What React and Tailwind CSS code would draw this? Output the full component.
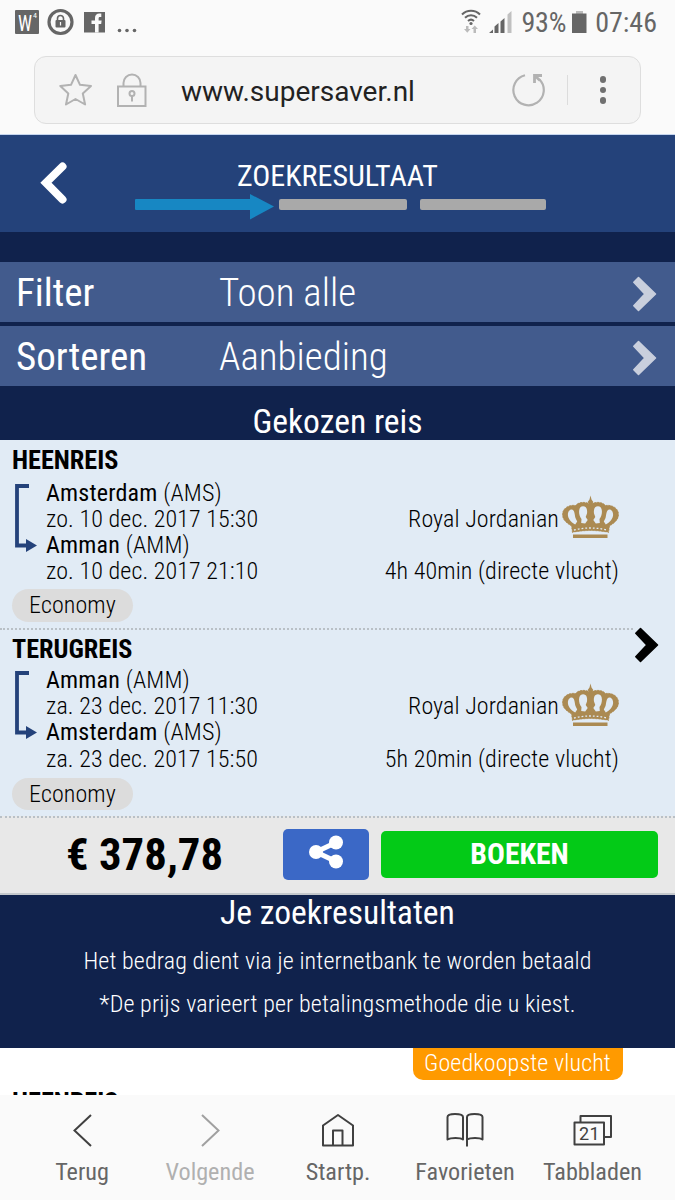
const trips = [
  {
    title: 'HEENREIS',
    from: 'Amsterdam',
    fromCode: 'AMS',
    depart: 'zo. 10 dec. 2017 15:30',
    to: 'Amman',
    toCode: 'AMM',
    arrive: 'zo. 10 dec. 2017 21:10',
    duration: '4h 40min (directe vlucht)'
  },
  {
    title: 'TERUGREIS',
    from: 'Amman',
    fromCode: 'AMM',
    depart: 'za. 23 dec. 2017 11:30',
    to: 'Amsterdam',
    toCode: 'AMS',
    arrive: 'za. 23 dec. 2017 15:50',
    duration: '5h 20min (directe vlucht)'
  }
]

function Crown() {
  return (
    <svg width="57" height="44" viewBox="0 0 57 44" fill="none" className="-mt-[3px] shrink-0">
      <path d="M28.500 0.500l1 4 1.800 2.500-1.800 3h-2l-1.800-3 1.800-2.500z" fill="#ab8a52" />
      <path
        d="M10.500 37.500L9.500 31C4 27.500 0.500 24.500 0.500 19.500 0.500 12.500 8 9.500 13.500 10.500 17 6.500 24 6.500 28.500 9.500 33 6.500 40 6.500 43.500 10.500 49 9.500 56.500 12.500 56.500 19.500 56.500 24.500 53 27.500 47.500 31L46.500 37.500q-18-4-36 0z"
        fill="#ab8a52"
        stroke="#ab8a52"
        strokeWidth="0.800"
        strokeDasharray="2 1"
      />
      {/* openings between the arches */}
      <g fill="#e1ebf5">
        <path d="M9.500 14.500c3.500 0.500 3 5 4 8.500l1.700 3.500-2 3c-4.500-2.500-7.500-6.500-7.300-10 0-2.500 1.500-5 3.600-5z" />
        <path d="M47.500 14.500c-3.500 0.500-3 5-4 8.500l-1.700 3.500 2 3c4.500-2.500 7.500-6.500 7.300-10 0-2.500-1.500-5-3.600-5z" />
        <path d="M21 11.300c3.800 0 4.500 3.700 4 7.200l-1.300 3.500 2 3-2.500 3.500-4-0.500 0.300-4c-3-3-4-12.700 1.500-12.700z" />
        <path d="M36 11.300c-3.800 0-4.500 3.700-4 7.200l1.300 3.500-2 3 2.500 3.500 4-0.500-0.300-4c3-3 4-12.700-1.500-12.700z" />
      </g>
      <path d="M12 35q16.500-4 33 0" stroke="#e1ebf5" strokeWidth="1.300" strokeDasharray="1.800 2" />
      <path d="M11 38.300h35" stroke="#e1ebf5" strokeWidth="1.400" />
      <path d="M11 41.300h34.500" stroke="#ab8a52" strokeWidth="3.400" />
    </svg>
  )
}

function RouteArrow() {
  return (
    <svg width="22" height="68" viewBox="0 0 22 68" className="shrink-0">
      <path d="M14 2H2v59.500h10" fill="none" stroke="#24427a" strokeWidth="3.800" />
      <path d="M11 55l11 6.500-11 6.500z" fill="#24427a" />
    </svg>
  )
}

function Chevron({ className }) {
  return (
    <svg width="24" height="36" viewBox="0 0 24 36" className={className}>
      <path d="M5.500 1.500L22.500 18 5.500 34.500 0.800 29.800l11-11.800L0.800 6.200z" fill="currentColor" stroke="currentColor" strokeWidth="1.500" strokeLinejoin="round" />
    </svg>
  )
}

function FilterRow({ label, value }) {
  return (
    <div className="flex h-[60px] items-center bg-[#425b8d] pl-4 pr-[18px] text-[39px] leading-[60px] text-white">
      <span className="w-[203px] pt-[2px]">{label}</span>
      <span className="flex-1 pt-[2px] font-light">{value}</span>
      <Chevron className="mt-1 text-[#c9cfdd]" />
    </div>
  )
}

function Trip({ trip, compact }) {
  return (
    <section className="flex h-[188px] flex-col pl-3 pr-14 text-black">
      <h3 className={`h-[30px] text-[26.2px] font-bold leading-[30px] ${compact ? 'mt-1' : 'mt-[5px]'}`}>{trip.title}</h3>
      <div className={`flex pl-[3px] ${compact ? 'mt-[3px]' : 'mt-[4.6px]'}`}>
        <div className="pt-1">
          <RouteArrow />
        </div>
        <div className="ml-[9px] flex-1 text-[24px] font-light leading-[26.2px] tracking-[0.1px]">
          <p className="tracking-[0.2px]"><span className="font-normal">{trip.from}</span> ({trip.fromCode})</p>
          <div className="flex h-[26.2px] items-center justify-between">
            <p>{trip.depart}</p>
            <p className="flex items-center gap-[3px]">
              Royal Jordanian
              <Crown />
            </p>
          </div>
          <p className="tracking-[0.2px]"><span className="font-normal">{trip.to}</span> ({trip.toCode})</p>
          <div className="flex justify-between">
            <p>{trip.arrive}</p>
            <p>{trip.duration}</p>
          </div>
        </div>
      </div>
      <div className={`w-[121px] rounded-full bg-[#dcdcdc] text-center text-[24px] font-light tracking-[0.1px] ${compact ? 'mt-[6px] h-8 leading-[32px]' : 'mt-[4.4px] h-[33px] leading-[33px]'}`}>
        Economy
      </div>
    </section>
  )
}

function StatusBar() {
  return (
    <div className="flex h-[56px] items-start pl-[15px] pr-[18px] text-[#666]">
      <svg width="130" height="40" viewBox="0 0 130 40" className="shrink-0">
        <rect x="0" y="10" width="24" height="24" rx="1" fill="#666" />
        <text x="3" y="30.500" fontSize="22" fill="#fff" textLength="14" lengthAdjust="spacingAndGlyphs">W</text>
        <text x="18" y="17.500" fontSize="8" fill="#fff">4</text>
        <circle cx="45.500" cy="22" r="11.500" fill="none" stroke="#666" strokeWidth="3.200" />
        <rect x="40.500" y="20" width="10" height="7.500" rx="1" fill="#666" />
        <path d="M42.500 20v-1.500a3 3 0 0 1 6 0V20" fill="none" stroke="#666" strokeWidth="1.600" />
        <path d="M45.500 22v3.500" stroke="#fafafa" strokeWidth="1.200" />
        <path d="M69 12h21v20.500H69z" fill="#666" />
        <path d="M80 32.500v-8.500h-3.500v-3.500H80v-2.500c0-3 1.700-4.500 4.300-4.500h2v3.500h-1.200c-1.300 0-1.500.6-1.500 1.600v1.900h3l-.4 3.500h-2.600v8.500z" fill="#fafafa" />
        <circle cx="104.500" cy="30.500" r="1.800" fill="#666" />
        <circle cx="112" cy="30.500" r="1.800" fill="#666" />
        <circle cx="119.500" cy="30.500" r="1.800" fill="#666" />
      </svg>
      <div className="flex-1" />
      <svg width="52" height="40" viewBox="0 0 52 40" className="shrink-0">
        <g fill="none" stroke="#666" strokeWidth="2">
          <path d="M1 14.500c5-5 13-5 18 0" />
          <path d="M4 17.800c3.500-3.500 8.500-3.500 12 0" />
          <path d="M7 21c2-1.800 4-1.800 6 0" />
        </g>
        <circle cx="10" cy="23.500" r="1.600" fill="#666" />
        <path d="M5 26h2.500v3h2l-3.200 3.800L3 29h2zM12.500 33v-4h-2l3.200-3.500L17 29h-2v4z" fill="#bbb" />
        <path d="M28 33l4-3.500V33zM33.500 33v-6.500l4-3.500v10zM39.500 33V21.500l4-3.500v15z" fill="#666" />
        <path d="M46.500 33V14.500l4-3.500v22z" fill="#c0c0c0" />
      </svg>
      <span className="ml-2 mt-[5px] text-[28px] leading-[36px] tracking-[-0.2px]">93%</span>
      <svg width="15" height="40" viewBox="0 0 15 40" className="ml-[6px] shrink-0">
        <path d="M4 11h7v3H4z" fill="#bbb" />
        <path d="M0 13.500h14.500V33H0z" fill="#666" />
      </svg>
      <span className="ml-2 mt-[5px] text-[28px] leading-[36px]">07:46</span>
    </div>
  )
}

function AddressBar() {
  return (
    <div className="mx-[34px] flex h-[68px] items-center rounded-xl border border-[#dedede] bg-[#f4f4f4] pl-6">
      <svg width="34" height="34" viewBox="0 0 34 34" fill="none" stroke="#b2b2b2" strokeWidth="2" strokeLinejoin="round">
        <path d="M16.500 2l4.500 9.800 11 1.200-8.200 7.500 2.300 11-9.600-5.500L7 31.500l2.300-11L1.300 13l10.700-1.200z" />
      </svg>
      <svg width="30" height="34" viewBox="0 0 30 34" fill="none" stroke="#b2b2b2" strokeWidth="2" className="ml-6">
        <rect x="1" y="13.500" width="27.500" height="19.500" />
        <path d="M6.500 13V10a8.500 8.500 0 0 1 17 0v3" />
        <circle cx="15" cy="20.500" r="2.500" />
        <path d="M15 23v5.500" />
      </svg>
      <span className="ml-[34px] mt-[3px] flex-1 font-['Roboto',sans-serif] text-[28px] leading-[40px] text-[#222] [font-stretch:100%]">www.supersaver.nl</span>
      <svg width="34" height="34" viewBox="0 0 34 34" fill="none" stroke="#b2b2b2" strokeWidth="2.200" className="ml-px">
        <path d="M13 2.300A15.200 15.200 0 1 0 27.500 6.500" />
        <path d="M22.500 10V2.500h7.500M22.500 2.500l5.500 5" strokeWidth="2.800" />
      </svg>
      <div className="ml-[21px] h-[30px] w-px bg-[#dcdcdc]" />
      <div className="ml-[32px] mr-[34px] flex flex-col gap-1">
        <span className="h-[6.500px] w-[6.500px] rounded-full bg-[#707070]" />
        <span className="h-[6.500px] w-[6.500px] rounded-full bg-[#707070]" />
        <span className="h-[6.500px] w-[6.500px] rounded-full bg-[#707070]" />
      </div>
    </div>
  )
}

function NavItem({ label, className, children }) {
  return (
    <div className={`flex flex-col items-center text-[24.2px] leading-[30px] ${className}`}>
      <svg width="40" height="36" viewBox="0 0 40 36" fill="none" strokeWidth="2" className="mb-[9px]">
        {children}
      </svg>
      {label}
    </div>
  )
}

export default function App() {
  return (
    <div className="flex h-[1200px] w-[675px] flex-col overflow-hidden bg-[#fafafa] font-['Roboto_Condensed','Roboto',sans-serif] [font-stretch:75%]">
      <div className="h-[135px] shrink-0 border-b border-[#c5d5ee]">
        <StatusBar />
        <AddressBar />
      </div>

      <header className="flex h-[97px] shrink-0 bg-[#24427a] pt-[24px] text-white">
        <svg width="28" height="44" viewBox="0 0 28 44" className="ml-10 mt-[2px]">
          <path d="M22.500 5.500L6 21.700 22.500 38.500" fill="none" stroke="currentColor" strokeWidth="8" strokeLinecap="round" />
        </svg>
        <div className="ml-[67px] w-[411px]">
          <h1 className="pl-[102px] text-[30px] leading-[34px]">ZOEKRESULTAAT</h1>
          <div className="flex h-[26px] items-center">
            <svg width="139" height="27" viewBox="0 0 139 27" className="mt-px">
              <path d="M1 6h114V1l24 12.500L115 26.500V17H1a1 1 0 0 1-1-1V7a1 1 0 0 1 1-1z" fill="#1787c3" />
            </svg>
            <span className="-mt-[3px] ml-[5px] h-[11px] w-[128px] rounded-[2px] bg-[#a9a9a9]" />
            <span className="-mt-[3px] ml-[13px] h-[11px] w-[126px] rounded-[2px] bg-[#a9a9a9]" />
          </div>
        </div>
      </header>

      <div className="flex h-[208px] shrink-0 flex-col gap-1 bg-[#10224c] pt-[30px]">
        <FilterRow label="Filter" value="Toon alle" />
        <FilterRow label="Sorteren" value="Aanbieding" />
        <h2 className="mt-[13px] text-center text-[33.600px] leading-[38px] text-white">Gekozen reis</h2>
      </div>

      <main className="relative h-[376px] shrink-0 bg-[#e1ebf5]">
        <Trip trip={trips[0]} />
        <div className="h-[2px] w-[633px] border-t-2 border-dotted border-[#b9c0c6]" />
        <Trip trip={trips[1]} compact />
        <Chevron className="absolute right-[16px] top-[187px] text-black" />
      </main>

      <div className="flex h-[79px] shrink-0 items-center border-b-2 border-t-2 border-t-[#b9c0c6] border-b-[#c4c8cc] bg-[#e8e8e8] pb-[3px] [border-top-style:dotted]">
        <span className="ml-[66px] w-[217px] pt-px text-[44.8px] font-bold text-black">€ 378,78</span>
        <button type="button" className="flex h-[51px] w-[86px] items-center justify-center rounded-[5px] bg-[#3b68c6]">
          <svg width="36" height="36" viewBox="0 0 36 36" fill="#fff" className="-mt-1">
            <circle cx="8" cy="18" r="7" />
            <circle cx="28" cy="8.500" r="7" />
            <circle cx="28" cy="27.500" r="7" />
            <path d="M28 8.500L8 18l20 9.500" fill="none" stroke="#fff" strokeWidth="5" />
          </svg>
        </button>
        <button type="button" className="ml-3 h-[47px] w-[277px] rounded-[5px] bg-[#03ca17] text-[29.700px] font-bold leading-[46px] text-white">BOEKEN</button>
      </div>

      <div className="h-[153px] shrink-0 bg-[#10224c] text-center text-white">
        <h2 className="text-[33.600px] leading-[36px]">Je zoekresultaten</h2>
        <p className="mt-[9px] text-[24px] font-light leading-[43px] tracking-[0.13px]">Het bedrag dient via je internetbank te worden betaald</p>
        <p className="text-[24px] font-light leading-[43px] tracking-[0.13px]">*De prijs varieert per betalingsmethode die u kiest.</p>
      </div>

      <div className="flex h-[47px] shrink-0 justify-between overflow-hidden bg-white pl-3 pr-[52px]">
        <h3 className="mt-[39px] text-[26.2px] font-bold leading-[30px] text-black">HEENREIS</h3>
        <div className="h-8 w-[210px] rounded-b-[10px] bg-[#ff9a00] pr-px text-center text-[24px] font-light leading-[30px] tracking-[0.12px] text-white">Goedkoopste vlucht</div>
      </div>

      <nav className="flex h-[105px] shrink-0 pl-[18px] pt-[17px] text-[#666]">
        <NavItem label="Terug" className="w-[128px]">
          <path d="M29 3L12.500 18.500 29 34" stroke="#404040" />
        </NavItem>
        <NavItem label="Volgende" className="w-[128px] text-[#b0b0b0]">
          <path d="M12 3l16.500 15.500L12 34" stroke="#a0a0a0" />
        </NavItem>
        <NavItem label="Startp." className="w-[128px]">
          <g stroke="#404040" strokeLinejoin="round">
            <path d="M5 13.500L20 3l15 10.500V33.500H5z" />
            <path d="M15 33V18.500h9.500V33" />
          </g>
        </NavItem>
        <NavItem label="Favorieten" className="w-[126px]">
          <g stroke="#404040" strokeLinejoin="round">
            <path d="M2.500 27.500V5q0-3 7.500-3 8 0 8 3v22.500q-2-1.500-7.500-1.500t-8 1.500z" />
            <path d="M22 34.500V5q0-3 7.500-3 8 0 8 3v22.500q-2-1.500-7.500-1.500t-8 1.500" />
          </g>
        </NavItem>
        <NavItem label="Tabbladen" className="w-[129px]">
          <g stroke="#404040" strokeLinejoin="round">
            <path d="M7.500 10V4h30.500v21h-7" />
            <rect x="1.500" y="10.500" width="29.500" height="22" />
          </g>
          <text x="16.500" y="27.500" textAnchor="middle" fontSize="18" letterSpacing="0.3" fill="#404040" className="font-['Roboto',sans-serif] [font-stretch:100%]">21</text>
        </NavItem>
      </nav>
    </div>
  )
}
